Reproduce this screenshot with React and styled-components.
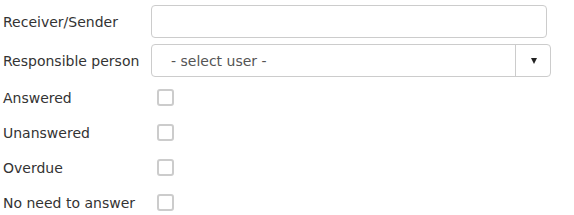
import styled, { createGlobalStyle } from "styled-components";

const GlobalStyle = createGlobalStyle`
  body {
    margin: 0;
    background: #fff;
    font-family: "DejaVu Sans", Verdana, sans-serif;
    font-size: 14px;
    color: #333;
  }
`;

const Form = styled.div`
  padding: 5px 0 0 3px;
`;

const Row = styled.div`
  display: flex;
  align-items: center;
  height: ${(p) => (p.field ? "33px" : "35px")};
  margin-bottom: ${(p) => (p.field ? "6px" : "0")};

  &:nth-child(2) {
    margin-bottom: 3px;
  }
`;

const Label = styled.label`
  width: 148px;
  flex-shrink: 0;
  white-space: nowrap;
`;

const TextInput = styled.input`
  box-sizing: border-box;
  width: 396px;
  height: 33px;
  border: 1px solid #ccc;
  border-radius: 4px;
  padding: 0 10px;
  font: inherit;
  outline: none;
`;

const Select = styled.div`
  box-sizing: border-box;
  display: flex;
  width: 400px;
  height: 33px;
  border: 1px solid #ccc;
  border-radius: 4px;
`;

const SelectValue = styled.div`
  flex: 1;
  display: flex;
  align-items: center;
  padding-left: 19px;
  color: #555;
`;

const SelectButton = styled.div`
  width: 33px;
  border-left: 1px solid #ccc;
  display: flex;
  align-items: center;
  justify-content: center;
  padding-left: 1px;
`;

const Arrow = styled.span`
  width: 0;
  height: 0;
  border-left: 3.5px solid transparent;
  border-right: 3.5px solid transparent;
  border-top: 6px solid #222;
  margin-top: 1px;
`;

const Check = styled.span`
  box-sizing: border-box;
  display: inline-block;
  width: 17px;
  height: 17px;
  margin-left: 6px;
  border: 2px solid #ccc;
  border-radius: 3px;
  background: #fff;
`;

const checks = ["Answered", "Unanswered", "Overdue", "No need to answer"];

export default function App() {
  return (
    <>
      <GlobalStyle />
      <Form>
        <Row field>
          <Label>Receiver/Sender</Label>
          <TextInput type="text" />
        </Row>
        <Row field>
          <Label>Responsible person</Label>
          <Select>
            <SelectValue>- select user -</SelectValue>
            <SelectButton>
              <Arrow />
            </SelectButton>
          </Select>
        </Row>
        {checks.map((c) => (
          <Row key={c}>
            <Label>{c}</Label>
            <Check />
          </Row>
        ))}
      </Form>
    </>
  );
}
